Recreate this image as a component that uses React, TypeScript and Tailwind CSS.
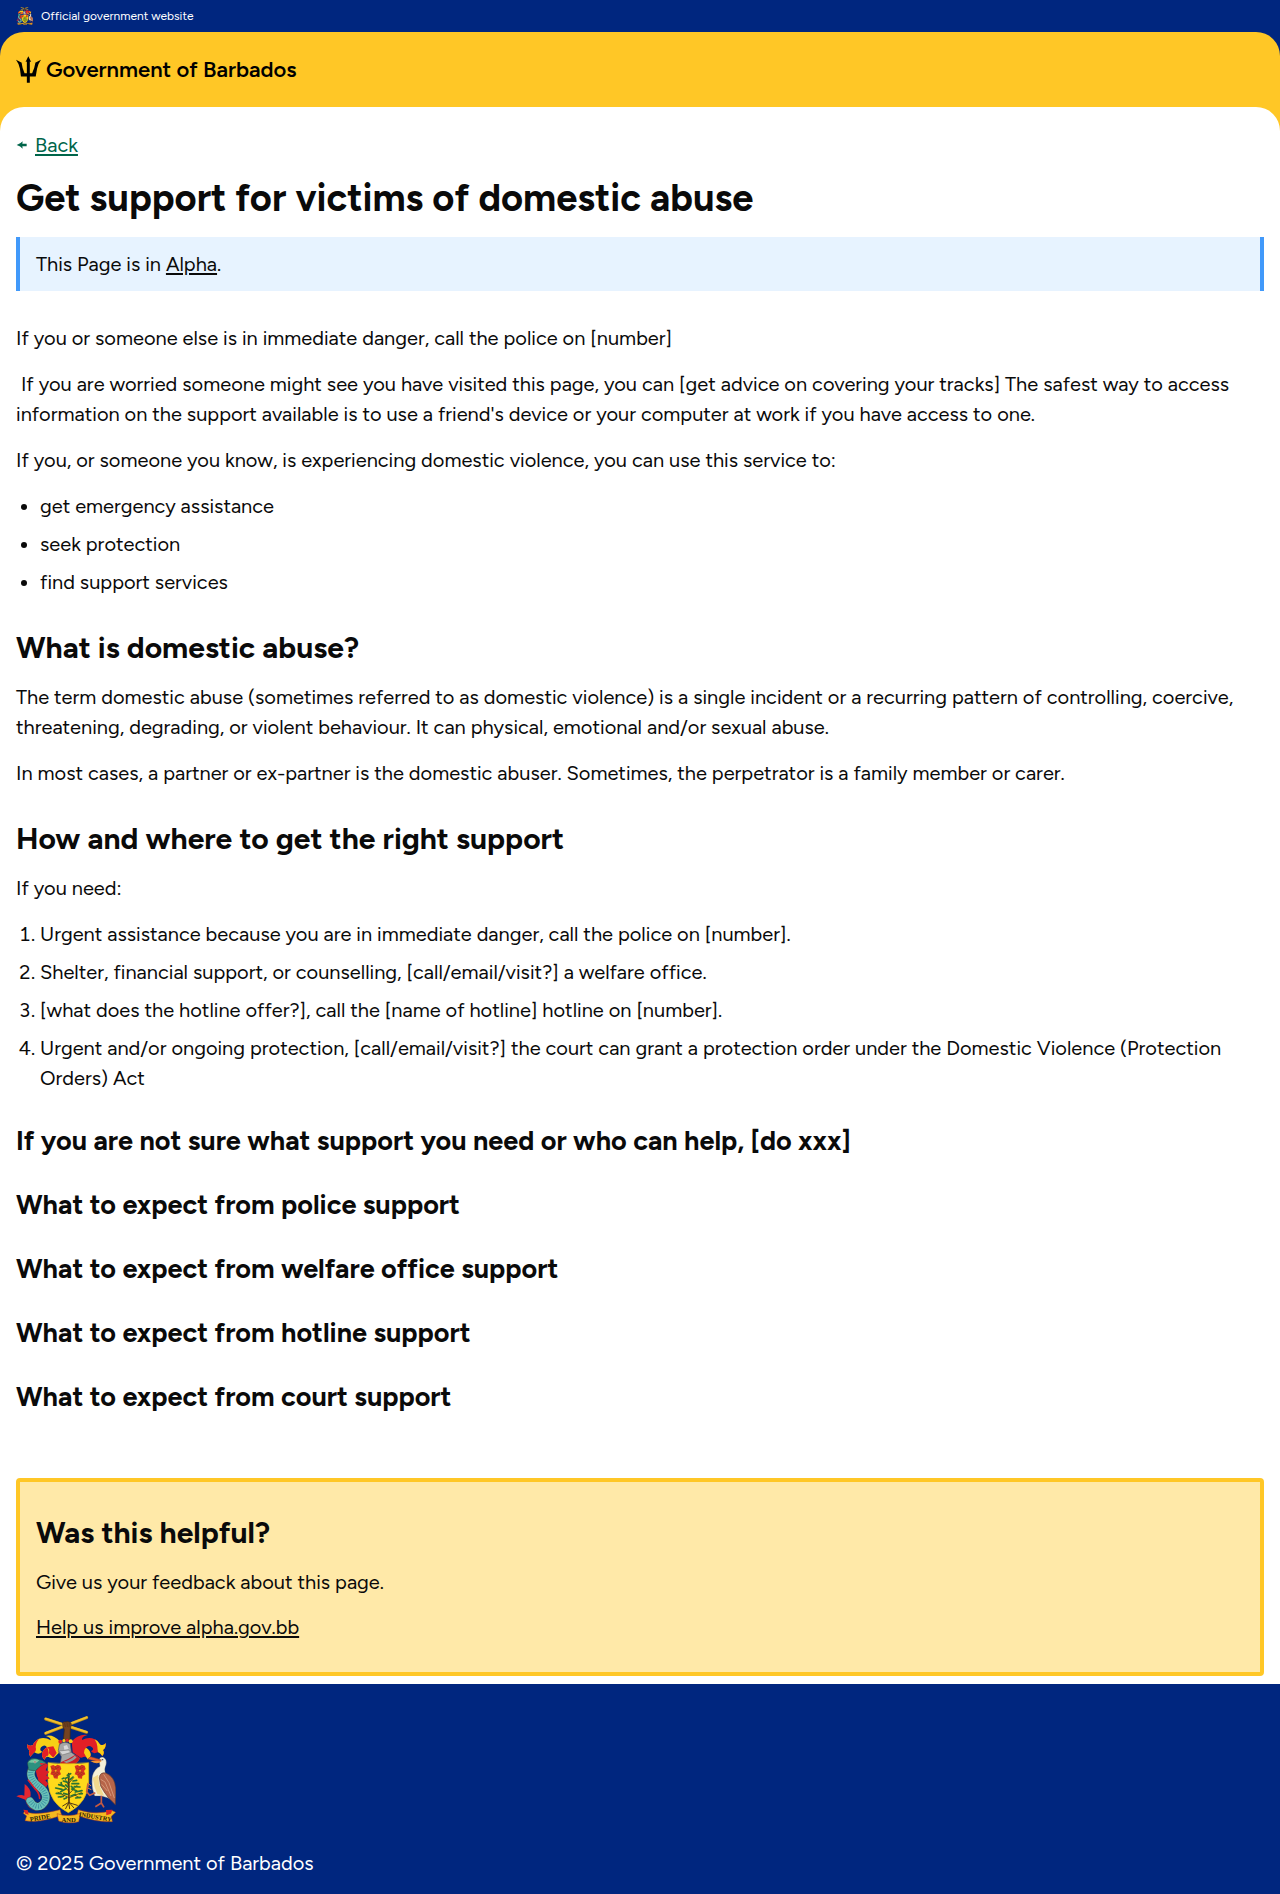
import type { ReactNode } from "react";

function CoatOfArms({ className }: { className: string }) {
  return (
    <svg viewBox="48 50 300 322" className={className} role="img" aria-label="Coat of arms of Barbados">
      {/* crest: crossed sugar canes held in a fist */}
      <g stroke="#b98a1c" strokeWidth="9" strokeLinecap="round">
        <path d="M137 58 L260 98" />
        <path d="M137 101 L260 54" />
      </g>
      <g stroke="#f0c02c" strokeWidth="6" strokeLinecap="round">
        <path d="M137 57 L260 97" />
        <path d="M137 100 L260 53" />
      </g>
      <path d="M188 70 Q190 65 196 67 Q203 64 207 67 Q214 67 214 75 L211 88 L210 120 L190 120 L193 90 Q187 83 188 70Z" fill="#744321" stroke="#3d2512" strokeWidth="2" />
      <path d="M194 70 L196 82 M201 68 L202 82 M208 70 L207 83" stroke="#3d2512" strokeWidth="1.5" fill="none" />
      {/* mantling */}
      <path d="M180 125 Q158 103 138 109 Q154 115 152 122 Q136 112 117 117 Q104 123 98 137 Q86 140 82 134 Q79 146 89 152 Q84 160 91 171 Q99 162 103 158 Q116 167 127 156 Q117 153 123 143 Q134 132 141 143 Q129 150 126 162 Q125 173 134 180 Q137 168 146 172 Q153 177 162 174 L176 160Z" fill="#f7cf16" />
      <path d="M117 117 Q104 123 98 137 Q86 140 82 134 Q79 146 89 152 Q84 160 91 171 Q99 162 103 158 Q108 156 108 148 Q104 134 117 117Z M141 143 Q151 150 146 160 L160 174 L170 160 L160 140Z" fill="#e21f26" />
      <path d="M141 143 Q129 150 126 162 Q125 173 134 180 Q137 168 144 168 Q149 156 141 143Z" fill="#e21f26" />
      <path d="M215 125 Q236 102 262 106 Q244 111 246 121 Q267 110 284 119 Q296 124 301 135 Q312 139 317 130 Q319 144 309 151 Q315 160 307 169 Q301 160 294 158 Q280 164 273 155 Q284 150 276 143 Q266 134 258 144 Q270 151 272 163 Q273 173 263 179 Q261 169 250 172 Q242 177 235 170 L218 158Z" fill="#e21f26" />
      <path d="M284 119 Q296 124 301 135 Q312 139 317 130 Q319 144 309 151 Q315 160 307 169 Q301 160 294 157 Q292 147 292 140 Q290 128 284 119Z M258 144 Q270 151 272 163 Q273 173 263 179 Q255 165 252 160 Q252 149 258 144Z" fill="#f7cf16" />
      <g>
        <circle cx="181" cy="126" r="6" fill="#e21f26" />
        <circle cx="192" cy="123" r="5" fill="#f7cf16" />
        <circle cx="202" cy="122" r="5" fill="#e21f26" />
        <circle cx="212" cy="125" r="6" fill="#f7cf16" />
      </g>
      {/* helmet */}
      <path d="M178 135 Q193 122 211 133 L214 158 L239 176 Q236 188 223 191 L181 193 L184 171 L175 153Z" fill="#a6a6a6" stroke="#555" strokeWidth="2" />
      <path d="M177 154 L205 151 L213 158 L187 166Z" fill="#d5d5d5" stroke="#666" strokeWidth="1.5" />
      <path d="M191 139 L201 136 L206 148 L193 150Z" fill="#d9d9d9" />
      <path d="M182 188 Q203 180 226 165 L239 174 Q237 188 222 192 L182 194Z" fill="#c91f27" />
      <path d="M190 186 Q212 180 224 168 L230 173 Q219 186 200 190Z" fill="#999" />
      {/* shield */}
      <path d="M144 189 Q204 196 266 189 L266 247 Q263 309 205 339 Q148 311 144 247Z" fill="#ffd91b" stroke="#ddb018" strokeWidth="2" />
      {[0, 73].map((offset) => (
        <g key={offset} transform={`translate(${offset} 0)`}>
          <path d="M151 199 L160 196 L166 200 L172 195 L181 198 L184 208 L179 214 L183 224 L174 229 L173 237 L162 236 L159 227 L151 224 L155 213Z" fill="#d83320" />
          <path d="M154 204 L164 210 L178 201 M156 220 L166 215 L178 222 M163 230 L172 228 M167 199 L167 207 M160 225 L167 222 L174 226" stroke="#8d3a17" strokeWidth="2" fill="none" />
          <circle cx="167" cy="213" r="3" fill="#edac1d" />
        </g>
      ))}
      <g fill="none" stroke="#503817" strokeLinecap="round">
        <path d="M206 222 L207 310" strokeWidth="5" />
        <path d="M207 294 L174 278 M207 275 L181 249 M207 261 L195 237 M208 282 L232 256 M208 294 L244 279 M207 250 L221 234 M193 287 L182 293 M224 286 L238 294" strokeWidth="2.5" />
        <path d="M206 308 L188 319 M206 309 L197 327 M208 309 L221 324 M207 309 L232 317 M206 309 L209 327" strokeWidth="3" />
      </g>
      <g fill="none" stroke="#2b7432" strokeWidth="5" strokeLinecap="round">
        <path d="M202 227 L212 222 M197 236 L207 231 M210 240 L219 232 M190 244 L203 248 M184 249 L184 257 M176 255 L193 260 M219 244 L230 242 M216 252 L236 252 M223 261 L240 262 M167 265 L186 269 M182 276 L198 267 M169 281 L183 282 M197 256 L204 262 M215 268 L230 273 M226 277 L246 273 M238 283 L247 282 M175 292 L190 290 M191 281 L202 284 M213 289 L226 284 M227 295 L242 293 M192 298 L200 294 M214 260 L221 267 M187 237 L192 235" />
      </g>
      {/* dolphin supporter */}
      <path d="M118 190 L133 186 L144 196 L137 212 L148 216 L139 227 L149 236 L136 242 L145 252 L136 266 L116 250 L110 214Z" fill="#d91e29" />
      <path d="M76 300 L49 290 Q62 283 73 288 L74 253 Q93 266 92 286 L90 298 Q98 318 114 322 L108 333 Q82 328 76 300Z" fill="#e32731" />
      <g fill="none" strokeLinecap="round">
        <path d="M100 203 C84 222 96 245 116 260 C140 276 145 300 126 316 C112 327 98 318 90 304" stroke="#36474e" strokeWidth="25" />
        <path d="M100 203 C84 222 96 245 116 260 C140 276 145 300 126 316 C112 327 98 318 90 304" stroke="#69c0b8" strokeWidth="22" />
        <path d="M98 205 C84 223 97 244 116 260 C140 277 143 299 126 315 C113 325 99 317 91 305" stroke="#3489a0" strokeWidth="15" strokeDasharray="2 5" strokeLinecap="butt" />
        <path d="M111 212 C108 229 121 242 132 252 M85 242 L103 265 Q118 278 119 296" stroke="#d91e29" strokeWidth="5" />
      </g>
      <path d="M82 190 Q91 171 112 178 Q128 180 138 190 L121 200 L106 213 L86 211Z" fill="#2c9180" stroke="#253f42" strokeWidth="1.5" />
      <path d="M84 188 Q99 174 118 182 L112 188 L95 189Z" fill="#75c5a0" />
      <path d="M119 190 L137 191 L123 197Z" fill="#e32731" />
      <circle cx="105" cy="187" r="4" fill="#f2ddc5" />
      <circle cx="105" cy="187" r="2" fill="#172128" />
      {/* pelican supporter */}
      <path d="M297 181 Q300 170 310 173 Q322 179 318 196 Q312 207 316 219 L340 241 Q351 273 344 304 L322 294 L304 289 L284 289 Q272 262 277 229 Q283 208 300 200Z" fill="#f4f0d9" stroke="#555" strokeWidth="1" />
      <path d="M278 235 Q282 263 292 283 L312 288 L298 256 L294 225Z" fill="#f1d98d" />
      <path d="M305 181 L272 171 L263 178 L294 186Z" fill="#e65d2b" stroke="#85432c" strokeWidth="1.5" />
      <path d="M271 184 Q293 198 305 184Z" fill="#f09434" />
      <circle cx="308" cy="180" r="2" fill="#253449" />
      <path d="M298 234 Q300 217 317 220 Q344 231 347 264 L346 315 L326 295 Q310 275 302 259Z" fill="#b76549" stroke="#643b2b" strokeWidth="2" />
      <path d="M302 239 L315 247 L333 289 M311 224 L327 249 L343 295 M305 254 L322 274" fill="none" stroke="#d49678" strokeWidth="3" />
      <path d="M286 279 L269 287 L260 276 L264 251 M304 288 L304 310 L286 321 M304 310 L312 323" fill="none" stroke="#c65a41" strokeWidth="5" />
      <path d="M263 250 L273 259 M263 265 L274 270" stroke="#ed863e" strokeWidth="3" />
      {/* motto ribbon */}
      <g fill="#f5b91f" stroke="#b3391d" strokeWidth="1.5">
        <path d="M76 332 Q91 352 180 330 L185 347 Q115 372 75 363 L80 349 L70 341Z" />
        <path d="M235 330 Q292 348 335 332 L347 338 L334 350 L337 366 Q292 369 231 347Z" />
        <path d="M171 342 Q206 354 241 341 L236 366 Q205 374 176 364Z" />
      </g>
      <path d="M70 330 L83 332 L86 345 L76 342Z M318 331 L337 330 L333 342 L319 347Z" fill="#dc2525" />
      <g fill="#2b1c08" fontFamily="Liberation Serif, serif" fontWeight="700" fontSize="20" textAnchor="middle">
        <text x="121" y="361" transform="rotate(-10 121 361)">PRIDE</text>
        <text x="206" y="367">AND</text>
        <text x="285" y="358" fontSize="19" transform="rotate(10 285 358)">INDUSTRY</text>
      </g>
    </svg>
  );
}

function Trident() {
  return (
    <svg viewBox="48 168 76 81" className="h-[27px] w-[25px] shrink-0" fill="#000" aria-hidden="true">
      <path d="M85.500 168 L94 186 L90 184 V220 H97 Q105 202 107 188 L102 190 L124 179 Q115 191 112 206 L108 230 H90 V249 H81 V230 H63 L60 206 Q57 191 48 179 L70 190 L65 188 Q67 205 74 220 H81 V184 L77 186Z" />
    </svg>
  );
}

function Heading({ children }: { children: ReactNode }) {
  return <h2 className="pt-4 text-[30px] leading-[37px] font-bold">{children}</h2>;
}

const expectations = [
  "If you are not sure what support you need or who can help, [do xxx]",
  "What to expect from police support",
  "What to expect from welfare office support",
  "What to expect from hotline support",
  "What to expect from court support",
];

export default function App() {
  return (
    <div className="bg-white font-['Figtree','Lato',sans-serif] text-[20px] leading-[30px] text-[#0a0a0a]">
      <header className="bg-[#00267f]">
        <div className="flex h-8 items-center gap-2 px-4 text-xs text-white">
          <CoatOfArms className="h-[18px] w-[17px]" />
          <span>Official government website</span>
        </div>
        <div className="rounded-t-3xl bg-[#ffc726]">
          <a href="#home" className="flex h-[75px] w-fit items-center gap-[5px] px-4 text-[22px] font-semibold text-black">
            <Trident />
            <span>Government of Barbados</span>
          </a>
        </div>
      </header>

      <div className="bg-[#ffc726]">
        <main className="rounded-t-3xl bg-white px-4 pt-[23px] pb-2">
          <a href="#back" className="flex w-fit items-center gap-2 text-[#00654a]">
            <svg viewBox="0 0 33 24" className="h-2 w-[11px]" fill="currentColor" aria-hidden="true">
              <path d="M2 12 Q14 8 20 1 L19 8 H32 V16 H19 L20 23 Q14 16 2 12Z" />
            </svg>
            <span className="underline decoration-2 underline-offset-2">Back</span>
          </a>
          <h1 className="mt-[15px] text-[38px] leading-[46px] font-bold">Get support for victims of domestic abuse</h1>
          <div className="mt-4 border-x-4 border-[#4199fa] bg-[#e7f3ff] px-4 py-3">
            This Page is in <a href="#alpha" className="underline decoration-2 underline-offset-2">Alpha</a>.
          </div>

          <div className="mt-8 flex flex-col gap-4">
            <p>If you or someone else is in immediate danger, call the police on [number]</p>
            <p>
              &nbsp;If you are worried someone might see you have visited this page, you can [get advice on covering your tracks] The safest way to access information on the support available is to use a friend's device or your computer at work if you have access to one.
            </p>
            <p>If you, or someone you know, is experiencing domestic violence, you can use this service to:</p>
            <ul className="flex list-disc flex-col gap-2 pl-6">
              <li>get emergency assistance</li>
              <li>seek protection</li>
              <li>find support services</li>
            </ul>
            <Heading>What is domestic abuse?</Heading>
            <p>
              The term domestic abuse (sometimes referred to as domestic violence) is a single incident or a recurring pattern of controlling, coercive, threatening, degrading, or violent behaviour. It can physical, emotional and/or sexual abuse.
            </p>
            <p>In most cases, a partner or ex-partner is the domestic abuser. Sometimes, the perpetrator is a family member or carer.</p>
            <Heading>How and where to get the right support</Heading>
            <p>If you need:</p>
            <ol className="flex list-decimal flex-col gap-2 pl-6">
              <li>Urgent assistance because you are in immediate danger, call the police on [number].</li>
              <li>Shelter, financial support, or counselling, [call/email/visit?] a welfare office.</li>
              <li>[what does the hotline offer?], call the [name of hotline] hotline on [number].</li>
              <li>Urgent and/or ongoing protection, [call/email/visit?] the court can grant a protection order under the Domestic Violence (Protection Orders) Act</li>
            </ol>
            {expectations.map((title) => (
              <h3 key={title} className="pt-4 text-[27px] leading-8 font-bold">{title}</h3>
            ))}
          </div>

          <section className="mt-[65px] rounded border-4 border-[#ffc726] bg-[#ffe9a8] px-4 pt-4 pb-[30px]">
            <Heading>Was this helpful?</Heading>
            <p className="mt-4">Give us your feedback about this page.</p>
            <p className="mt-[15px]">
              <a href="#feedback" className="underline decoration-2 underline-offset-2">Help us improve alpha.gov.bb</a>
            </p>
          </section>
        </main>
      </div>

      <footer className="bg-[#00267f] px-4 pt-8 pb-4 text-white">
        <CoatOfArms className="h-[108px] w-[100px]" />
        <p className="mt-6">© 2025 Government of Barbados</p>
      </footer>
    </div>
  );
}
